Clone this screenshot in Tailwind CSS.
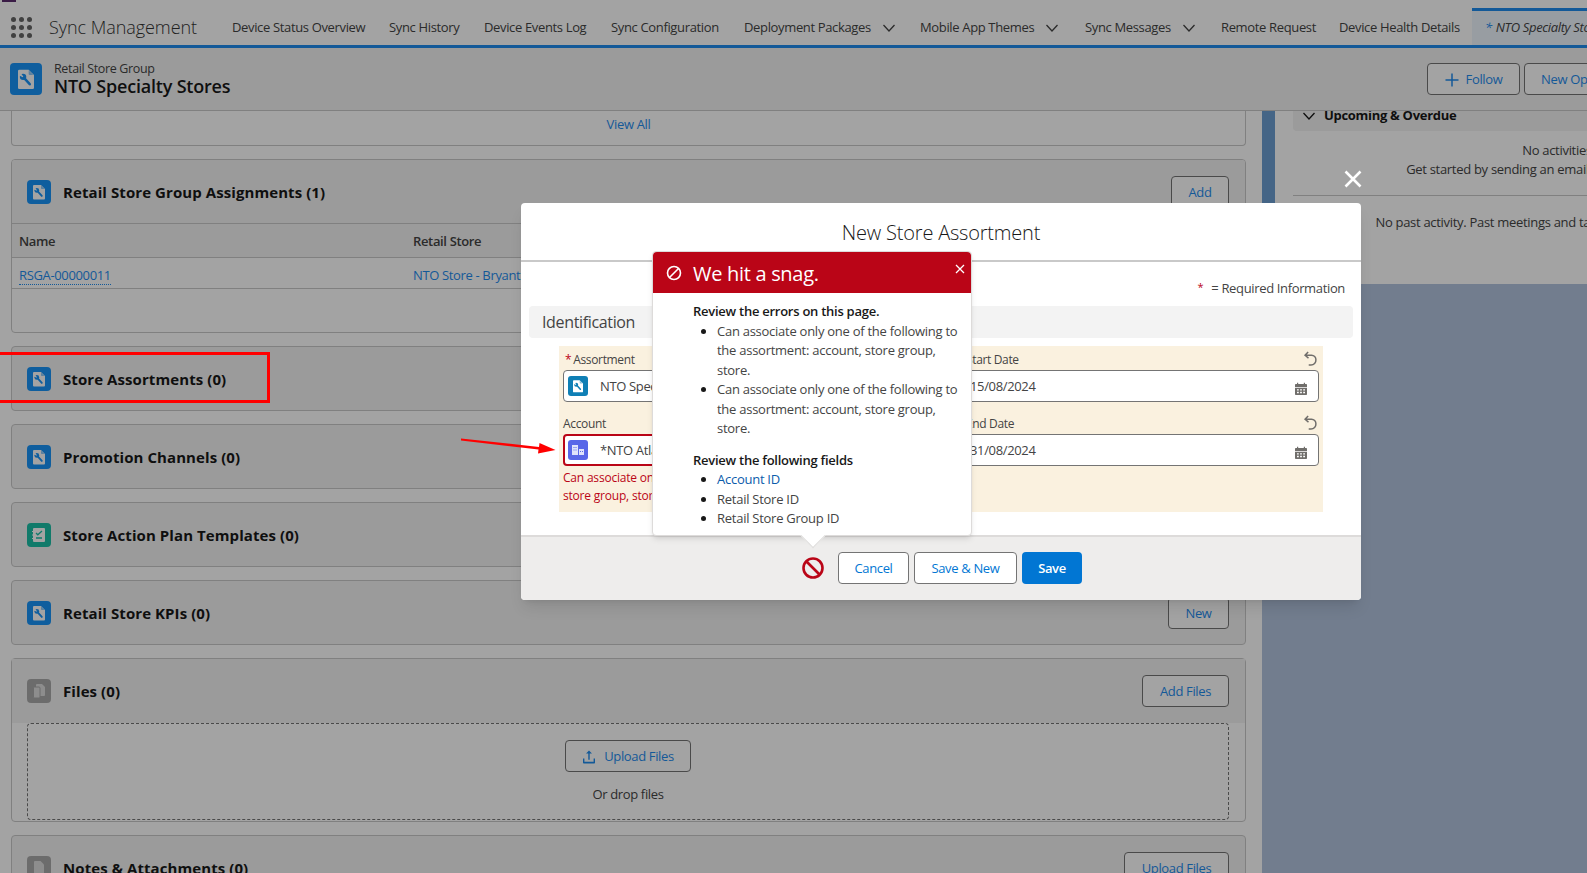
<!DOCTYPE html>
<html lang="en">
<head>
    <meta charset="UTF-8">
    <meta name="viewport" content="width=device-width, initial-scale=1.0">
    <title>New Store Assortment - Sync Management</title>
    <script src="https://cdn.jsdelivr.net/npm/@tailwindcss/browser@4"></script>
</head>
<body class="relative h-[873px] overflow-hidden bg-[#b2c4de] font-['Open_Sans',sans-serif] text-[13px] tracking-[-0.35px] text-[#181818]">
    <svg class="hidden">
        <symbol id="doc-wrench" viewBox="0 0 24 24">
            <path fill="#fff" d="M7 5h7l4 4v9.500a1 1 0 0 1-1 1H7a1 1 0 0 1-1-1V6a1 1 0 0 1 1-1z"/>
            <path fill="currentColor" d="M14 5.500v2.700a.8.8 0 0 0 .8.8h2.700z" opacity=".5"/>
            <circle cx="9.800" cy="10.400" r="2.400" fill="currentColor"/>
            <path fill="#fff" d="M8 7.500l2 2.700-.4.500-3-1.500z"/>
            <path fill="none" stroke="currentColor" stroke-width="1.900" stroke-linecap="round" d="M10.500 11.200l4.300 4.700"/>
        </symbol>
        <symbol id="chevron" viewBox="0 0 14 14">
            <path fill="none" stroke="currentColor" stroke-width="1.3" d="M1.500 4l5.500 6 5.500-6"/>
        </symbol>
        <symbol id="undo" viewBox="0 0 14 14">
            <path fill="none" stroke="currentColor" stroke-width="1.300" d="M4.500 .8L1.800 3.700l3 2.500M1.900 3.700h5.600a3.800 3.800 0 0 1 3.800 3.900 4.300 4.300 0 0 1-4.300 4.600H5"/>
        </symbol>
        <symbol id="calendar" viewBox="0 0 14 14">
            <path fill="currentColor" fill-rule="evenodd" d="M3 .8h1.200V2h5.600V.8H11V2h1.200a.8.8 0 0 1 .8.8V5H1V2.800a.8.8 0 0 1 .8-.8H3zM1 5.800h12v6.400a.8.8 0 0 1-.8.8H1.800a.8.8 0 0 1-.8-.8zM3 7.200v1.400h1.800V7.200zm3.100 0v1.400h1.800V7.200zm3.100 0v1.400H11V7.200zM3 9.800v1.400h1.800V9.800zm3.100 0v1.400h1.800V9.800zm3.100 0v1.400H11V9.800z"/>
        </symbol>
    </svg>

    <!-- app nav -->
    <nav class="relative flex h-[48px] items-center border-b-[3px] border-[#1f8cee] bg-white pt-[10px]">
        <div class="absolute left-[2px] top-0 h-[2px] w-[14px] bg-[#5c2d6e]"></div>
        <div class="ml-[11px] grid w-[21px] grid-cols-3 gap-[3px]">
            <i class="size-[5px] rounded-full bg-[#666]"></i><i class="size-[5px] rounded-full bg-[#666]"></i><i class="size-[5px] rounded-full bg-[#666]"></i>
            <i class="size-[5px] rounded-full bg-[#666]"></i><i class="size-[5px] rounded-full bg-[#666]"></i><i class="size-[5px] rounded-full bg-[#666]"></i>
            <i class="size-[5px] rounded-full bg-[#666]"></i><i class="size-[5px] rounded-full bg-[#666]"></i><i class="size-[5px] rounded-full bg-[#666]"></i>
        </div>
        <span class="ml-[17px] w-[183px] text-[18px] font-light tracking-[-0.05px] text-[#333]">Sync Management</span>
        <a class="w-[157px] whitespace-nowrap text-[#444]">Device Status Overview</a>
        <a class="w-[95px] whitespace-nowrap text-[#444]">Sync History</a>
        <a class="w-[127px] whitespace-nowrap text-[#444]">Device Events Log</a>
        <a class="w-[133px] whitespace-nowrap text-[#444]">Sync Configuration</a>
        <a class="flex w-[176px] items-center whitespace-nowrap text-[#444]">Deployment Packages<svg class="ml-[11px] size-[14px]"><use href="#chevron"/></svg></a>
        <a class="flex w-[165px] items-center whitespace-nowrap text-[#444]">Mobile App Themes<svg class="ml-[11px] size-[14px]"><use href="#chevron"/></svg></a>
        <a class="flex w-[136px] items-center whitespace-nowrap text-[#444]">Sync Messages<svg class="ml-[11px] size-[14px]"><use href="#chevron"/></svg></a>
        <a class="w-[118px] whitespace-nowrap text-[#444]">Remote Request</a>
        <a class="w-[133px] whitespace-nowrap text-[#444]">Device Health Details</a>
        <a class="flex h-[37px] flex-1 items-center self-end overflow-hidden whitespace-nowrap border-t-[3px] border-[#1f8cee] bg-[#eef6fd] pl-[13px] italic text-[#444]"><span class="mr-1 text-[#1f8cee]">*</span>NTO Specialty Stores</a>
    </nav>

    <!-- record header -->
    <header class="relative flex h-[63px] items-center border-b border-[#c9c9c9] bg-[#f3f3f3] pl-[10px]">
        <div class="flex size-[32px] items-center justify-center rounded-[4px] bg-[#1894f8] text-[#1894f8]">
            <svg class="size-[32px]"><use href="#doc-wrench"/></svg>
        </div>
        <div class="ml-[12px] flex flex-col">
            <span class="text-[12.500px] leading-[14px] text-[#444]">Retail Store Group</span>
            <span class="text-[18px] font-semibold leading-[21px] tracking-[-0.2px]">NTO Specialty Stores</span>
        </div>
        <div class="absolute left-[1427px] flex gap-[4px]">
            <button class="flex h-[32px] w-[93px] items-center justify-center rounded-[4px] border border-[#747474] bg-white pt-[1px] text-[#1f8cee]"><svg class="mr-[7px] size-[14px]" viewBox="0 0 14 14"><path stroke="currentColor" stroke-width="1.500" d="M7 .5v13M.5 7h13"/></svg>Follow</button>
            <button class="h-[32px] w-[120px] whitespace-nowrap rounded-[4px] border border-[#747474] bg-white pl-[16px] pt-[1px] text-left text-[#1f8cee]">New Opportunity</button>
        </div>
    </header>

    <main class="flex h-[762px] overflow-hidden">
        <!-- related lists -->
        <section class="flex w-[1262px] shrink-0 flex-col gap-[13px] bg-white pl-[11px] pr-[16px]">
            <div class="flex h-[35px] shrink-0 items-start justify-center rounded-b-[4px] border border-t-0 border-[#c9c9c9] pt-[4px]">
                <a class="text-[#1f8cee]">View All</a>
            </div>

            <div class="h-[174px] shrink-0 overflow-hidden rounded-[4px] border border-[#c9c9c9]">
                <div class="flex h-[64px] items-center border-b border-[#c9c9c9] bg-[#f3f3f3] pl-[15px] pr-[16px]">
                    <div class="flex size-[24px] items-center justify-center rounded-[4px] bg-[#1894f8] text-[#1894f8]"><svg class="size-[24px]"><use href="#doc-wrench"/></svg></div>
                    <h2 class="ml-[12px] pt-[1px] text-[15px] font-bold tracking-[0.08px]">Retail Store Group Assignments (1)</h2>
                    <button class="ml-auto h-[32px] w-[58px] rounded-[4px] border border-[#747474] bg-white pt-[2px] text-[#1f8cee]">Add</button>
                </div>
                <div class="flex h-[34px] items-center border-b border-[#c9c9c9] bg-[#f3f3f3] pl-[7px] pt-[3px] font-semibold text-[#444]">
                    <span class="w-[394px]">Name</span><span>Retail Store</span>
                </div>
                <div class="flex h-[31px] items-center border-b border-[#c9c9c9] pl-[7px] pt-[5px] text-[#1f8cee]">
                    <a class="w-[394px]"><span class="border-b border-dotted border-[#1f8cee]">RSGA-00000011</span></a><a>NTO Store - Bryant Park</a>
                </div>
            </div>

            <div class="flex h-[65px] shrink-0 items-center rounded-[4px] border border-[#c9c9c9] bg-[#f3f3f3] pl-[15px] pr-[16px]">
                <div class="flex size-[24px] items-center justify-center rounded-[4px] bg-[#1894f8] text-[#1894f8]"><svg class="size-[24px]"><use href="#doc-wrench"/></svg></div>
                <h2 class="ml-[12px] pt-[1px] text-[15px] font-bold tracking-[0.08px]">Store Assortments (0)</h2>
            </div>
            <div class="flex h-[65px] shrink-0 items-center rounded-[4px] border border-[#c9c9c9] bg-[#f3f3f3] pl-[15px] pr-[16px]">
                <div class="flex size-[24px] items-center justify-center rounded-[4px] bg-[#1894f8] text-[#1894f8]"><svg class="size-[24px]"><use href="#doc-wrench"/></svg></div>
                <h2 class="ml-[12px] pt-[1px] text-[15px] font-bold tracking-[0.08px]">Promotion Channels (0)</h2>
            </div>
            <div class="flex h-[65px] shrink-0 items-center rounded-[4px] border border-[#c9c9c9] bg-[#f3f3f3] pl-[15px] pr-[16px]">
                <div class="flex size-[24px] items-center justify-center rounded-[4px] bg-[#1bbfa7]">
                    <svg class="size-[18px]" viewBox="0 0 18 18"><path fill="#fff" d="M4 2h10a1 1 0 0 1 1 1v12a1 1 0 0 1-1 1H4a1 1 0 0 1-1-1v-2H2v-1h1V9.500H2v-1h1V6H2V5h1V3a1 1 0 0 1 1-1z"/><path fill="none" stroke="#1bbfa7" stroke-width="1.300" d="M6 7l1.800 1.800L12 5M6 12h6"/></svg>
                </div>
                <h2 class="ml-[12px] pt-[1px] text-[15px] font-bold tracking-[0.08px]">Store Action Plan Templates (0)</h2>
            </div>
            <div class="flex h-[65px] shrink-0 items-center rounded-[4px] border border-[#c9c9c9] bg-[#f3f3f3] pl-[15px] pr-[16px]">
                <div class="flex size-[24px] items-center justify-center rounded-[4px] bg-[#1894f8] text-[#1894f8]"><svg class="size-[24px]"><use href="#doc-wrench"/></svg></div>
                <h2 class="ml-[12px] pt-[1px] text-[15px] font-bold tracking-[0.08px]">Retail Store KPIs (0)</h2>
                <button class="ml-auto h-[32px] w-[61px] rounded-[4px] border border-[#747474] bg-white pt-[2px] text-[#1f8cee]">New</button>
            </div>

            <div class="h-[164px] shrink-0 rounded-[4px] border border-[#c9c9c9]">
                <div class="flex h-[64px] items-center bg-[#f3f3f3] pl-[15px] pr-[16px]">
                    <div class="flex size-[24px] items-center justify-center rounded-[4px] bg-[#aaa]">
                        <svg class="size-[18px]" viewBox="0 0 18 18"><path fill="#ddd" d="M7 2h5l3 3v8a1 1 0 0 1-1 1H7a1 1 0 0 1-1-1V3a1 1 0 0 1 1-1z"/><path fill="#ddd" stroke="#aaa" d="M4.500 5H9a1 1 0 0 1 1 1v9a1 1 0 0 1-1 1H4.500a1 1 0 0 1-1-1V6a1 1 0 0 1 1-1z"/></svg>
                    </div>
                    <h2 class="ml-[12px] text-[15px] font-bold tracking-[0.08px]">Files (0)</h2>
                    <button class="ml-auto h-[32px] w-[87px] rounded-[4px] border border-[#747474] bg-white pt-[2px] text-[#1f8cee]">Add Files</button>
                </div>
                <div class="ml-[15px] mr-[16px] flex h-[97px] flex-col items-center rounded-[4px] border border-dashed border-[#747474] pt-[16px]">
                    <button class="flex h-[32px] w-[126px] items-center justify-center gap-[8px] rounded-[4px] border border-[#747474] bg-white pt-[2px] text-[#1f8cee]">
                        <svg class="size-[14px]" viewBox="0 0 14 14"><path fill="currentColor" d="M6.300 3.500H4L7 .5l3 3H7.700v6.300H6.300zM1 8.500h1.400v3.300h9.200V8.500H13v4.200a.8.8 0 0 1-.8.8H1.800a.8.8 0 0 1-.8-.8z"/></svg>
                        Upload Files
                    </button>
                    <span class="mt-[13px] text-[#444]">Or drop files</span>
                </div>
            </div>

            <div class="h-[100px] shrink-0 rounded-[4px] border border-[#c9c9c9] bg-[#f3f3f3]">
                <div class="flex h-[64px] items-center pl-[15px] pr-[16px]">
                    <div class="flex size-[24px] items-center justify-center rounded-[4px] bg-[#aaa]">
                        <svg class="size-[18px]" viewBox="0 0 18 18"><path fill="#ddd" d="M5 2h5.500L14 5.500V15a1 1 0 0 1-1 1H5a1 1 0 0 1-1-1V3a1 1 0 0 1 1-1z"/></svg>
                    </div>
                    <h2 class="ml-[12px] text-[15px] font-bold tracking-[0.08px]">Notes &amp; Attachments (0)</h2>
                    <button class="ml-auto h-[32px] w-[105px] rounded-[4px] border border-[#747474] bg-white pt-[2px] text-[#1f8cee]">Upload Files</button>
                </div>
            </div>
        </section>

        <!-- activity panel -->
        <section class="flex h-[173px] flex-1">
            <div class="w-[13px] shrink-0 bg-[#6d9ed2]"></div>
            <div class="flex-1 overflow-hidden bg-white pl-[18px]">
                <div class="w-[580px] tracking-[-0.3px]">
                    <div class="-mt-[11px] flex h-[31px] items-center rounded-[4px] bg-[#f3f3f3] pl-[9px] font-bold">
                        <svg class="mr-[8px] size-[14px]"><use href="#chevron"/></svg>Upcoming &amp; Overdue
                    </div>
                    <div class="flex h-[65px] flex-col items-center justify-center border-b border-[#c9c9c9] pb-[6px] text-[#444]">
                        <p class="leading-[19px]">No activities to show.</p>
                        <p class="leading-[19px]">Get started by sending an email, scheduling a task, and more.</p>
                    </div>
                    <p class="mt-[17px] text-center leading-[19px] text-[#444]">No past activity. Past meetings and tasks marked as done show up here.</p>
                </div>
            </div>
        </section>
    </main>

    <!-- backdrop -->
    <div class="absolute inset-0 bg-black/36"></div>

    <svg class="absolute left-[1343px] top-[169px] size-[20px]" viewBox="0 0 20 20"><path stroke="#fff" stroke-width="2.600" d="M2.500 2.500l15 15M17.500 2.500l-15 15"/></svg>

    <!-- modal -->
    <div class="absolute left-[521px] top-[203px] flex h-[397px] w-[840px] flex-col rounded-[4px] bg-white shadow-lg">
        <div class="flex h-[59px] shrink-0 items-center justify-center border-b-2 border-[#c9c9c9] pt-[2px] text-[20px] font-light tracking-[-0.2px]">New Store Assortment</div>
        <div class="flex-1">
            <p class="flex h-[44px] items-center justify-end pr-[16px] pt-[9px] text-[#444]"><span class="mr-[8px] -mt-[2px] text-[11px] text-[#ba0517]">*</span>= Required Information</p>
            <div class="mx-[8px] flex h-[32px] items-center rounded-[4px] bg-[#f3f3f3] pl-[13px] text-[16px] text-[#444]">Identification</div>
            <div class="ml-[38px] mt-[8px] h-[166px] w-[764px] bg-[#faf1df] px-[4px]">
                <div class="grid grid-cols-[382px_362px] gap-x-[12px] pt-[3px] text-[12px] text-[#444]">
                    <div>
                        <label class="flex h-[21px] items-center"><span class="ml-[2px] mr-[2px] text-[#ba0517]">*</span>Assortment</label>
                        <div class="flex h-[32px] items-center rounded-[4px] border border-[#747474] bg-white pl-[4px] text-[13px]">
                            <div class="flex size-[20px] items-center justify-center rounded-[3px] bg-[#0f7fb5] text-[#0f7fb5]"><svg class="size-[20px]"><use href="#doc-wrench"/></svg></div>
                            <span class="ml-[12px] pt-[2px]">NTO Specialty Stores</span>
                        </div>
                        <label class="mt-[11px] flex h-[21px] items-center">Account</label>
                        <div class="flex h-[32px] items-center rounded-[4px] border-2 border-[#ba0517] bg-white pl-[3px] text-[13px]">
                            <div class="flex size-[20px] items-center justify-center rounded-[3px] bg-[#5867e8]">
                                <svg class="size-[14px]" viewBox="0 0 14 14"><path fill="#dfe3fb" d="M1 2h6v10H1zM8 6h5v6H8z"/><path fill="#5867e8" d="M2.500 4h1v1h-1zm2 0h1v1h-1zm-2 2.500h1v1h-1zm2 0h1v1h-1zM9 8h1v1H9zm2 0h1v1h-1z"/></svg>
                            </div>
                            <span class="ml-[12px] pt-[2px]">*NTO Atlanta</span>
                        </div>
                        <p class="mt-[3px] whitespace-nowrap text-[12px] leading-[18px] tracking-[-0.2px] text-[#ba0517]">Can associate only one of the following to the assortment: account,<br>store group, store.</p>
                    </div>
                    <div class="relative">
                        <label class="flex h-[21px] items-center pl-[9px]">Start Date</label>
                        <svg class="absolute right-[0px] top-[2px] size-[16px] text-[#706e6b]"><use href="#undo"/></svg>
                        <div class="flex h-[32px] items-center justify-between rounded-[4px] border border-[#747474] bg-white pl-[12px] pr-[10px] text-[13px]"><span class="pt-[2px]">15/08/2024</span><svg class="mt-[5px] size-[14px] text-[#706e6b]"><use href="#calendar"/></svg></div>
                        <label class="mt-[11px] flex h-[21px] items-center pl-[9px]">End Date</label>
                        <svg class="absolute right-[0px] top-[66px] size-[16px] text-[#706e6b]"><use href="#undo"/></svg>
                        <div class="flex h-[32px] items-center justify-between rounded-[4px] border border-[#747474] bg-white pl-[12px] pr-[10px] text-[13px]"><span class="pt-[2px]">31/08/2024</span><svg class="mt-[5px] size-[14px] text-[#706e6b]"><use href="#calendar"/></svg></div>
                    </div>
                </div>
            </div>
        </div>
        <div class="flex h-[65px] shrink-0 items-center justify-end gap-[5px] rounded-b-[4px] border-t-2 border-[#dddbda] bg-[#eeedec] pb-[2px] pr-[279px]">
            <svg class="mr-[8px] size-[24px]" viewBox="0 0 24 24"><circle cx="12" cy="12" r="9.500" fill="none" stroke="#ba0517" stroke-width="2.600"/><path stroke="#ba0517" stroke-width="2.600" d="M5.500 5.500l13 13"/></svg>
            <button class="h-[32px] w-[71px] rounded-[4px] border border-[#747474] bg-white pt-[2px] text-[#0176d3]">Cancel</button>
            <button class="h-[32px] w-[103px] rounded-[4px] border border-[#747474] bg-white pt-[2px] text-[#0176d3]">Save &amp; New</button>
            <button class="h-[32px] w-[60px] rounded-[4px] bg-[#0176d3] pt-[2px] font-semibold text-white">Save</button>
        </div>

        <!-- error popover -->
        <div class="absolute left-[131px] top-[48px] h-[285px] w-[320px] rounded-[4px] border border-[#dddbda] bg-white shadow-md">
            <div class="flex h-[41px] items-center rounded-t-[4px] bg-[#ba0517] pl-[13px] text-white">
                <svg class="size-[16px]" viewBox="0 0 16 16"><circle cx="8" cy="8" r="6.500" fill="none" stroke="#fff" stroke-width="1.600"/><path stroke="#fff" stroke-width="1.600" d="M3.500 12.500l9-9"/></svg>
                <h3 class="ml-[11px] pt-[2px] text-[20px] tracking-[-0.3px]">We hit a snag.</h3>
                <svg class="ml-auto mr-[6px] -mt-[7px] size-[10px]" viewBox="0 0 10 10"><path stroke="#fff" stroke-width="1.300" d="M1 1l8 8M9 1L1 9"/></svg>
            </div>
            <div class="pl-[40px] pr-[8px] pt-[9px] leading-[19.500px] tracking-[-0.26px] text-[#444]">
                <p class="font-semibold text-[#181818]">Review the errors on this page.</p>
                <ul class="list-disc pl-[24px] marker:text-[#181818]">
                    <li>Can associate only one of the following to the assortment: account, store group, store.</li>
                    <li>Can associate only one of the following to the assortment: account, store group, store.</li>
                </ul>
                <p class="mt-[12px] font-semibold text-[#181818]">Review the following fields</p>
                <ul class="list-disc pl-[24px] marker:text-[#181818]">
                    <li class="text-[#0b5cab]">Account ID</li>
                    <li>Retail Store ID</li>
                    <li>Retail Store Group ID</li>
                </ul>
            </div>
            <div class="absolute -bottom-[15px] left-[145px] h-[15px] w-[30px] overflow-hidden">
                <div class="absolute -top-[11px] left-[5px] size-[20px] rotate-45 border-b border-r border-[#dddbda] bg-white"></div>
            </div>
        </div>
    </div>

    <!-- annotations from the screenshot -->
    <div class="absolute -left-[4px] top-[352px] h-[51px] w-[274px] border-[3px] border-[#f00]"></div>
    <svg class="absolute left-[460px] top-[436px] h-[20px] w-[100px]" viewBox="0 0 100 20"><path fill="#f00" d="M1 2.500l78 8.500.5-4 16 7-17.500 3.500.5-4L1 4.500z"/></svg>
</body>
</html>
